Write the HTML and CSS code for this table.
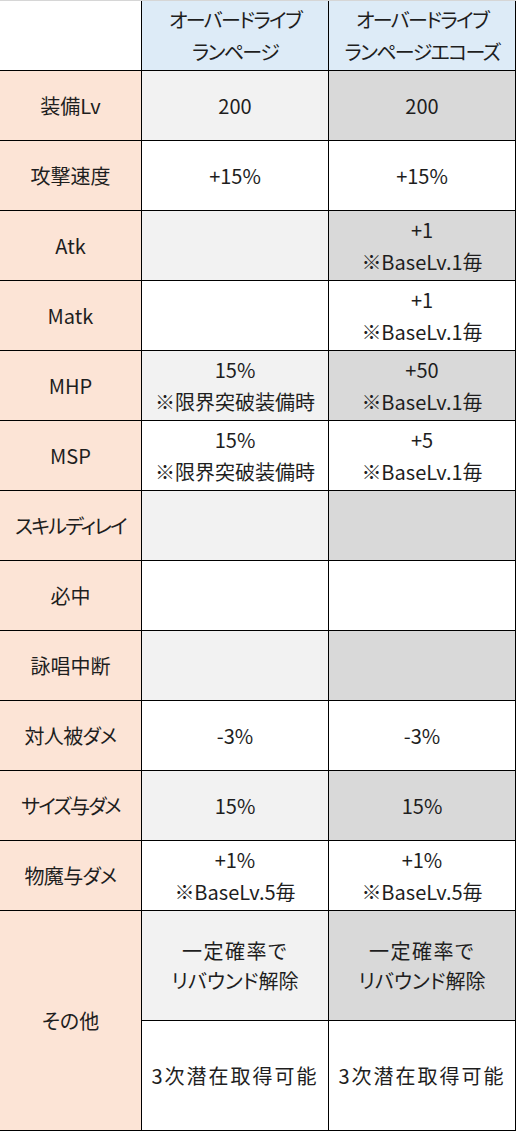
FILE: index.html
```html
<!DOCTYPE html>
<html lang="ja">
<head>
<meta charset="utf-8">
<title>オーバードライブ比較</title>
<link rel="stylesheet" href="styles.css">
</head>
<body>
<div class="table">
  <div class="cell corner"></div>
  <div class="cell head">オーバードライブ<br>ランページ</div>
  <div class="cell head">オーバードライブ<br>ランページエコーズ</div>

  <div class="cell label">装備Lv</div>
  <div class="cell light">200</div>
  <div class="cell dark">200</div>

  <div class="cell label">攻撃速度</div>
  <div class="cell">+15%</div>
  <div class="cell">+15%</div>

  <div class="cell label">Atk</div>
  <div class="cell light"></div>
  <div class="cell dark">+1<br>※BaseLv.1毎</div>

  <div class="cell label">Matk</div>
  <div class="cell"></div>
  <div class="cell">+1<br>※BaseLv.1毎</div>

  <div class="cell label">MHP</div>
  <div class="cell light">15%<br>※限界突破装備時</div>
  <div class="cell dark">+50<br>※BaseLv.1毎</div>

  <div class="cell label">MSP</div>
  <div class="cell">15%<br>※限界突破装備時</div>
  <div class="cell">+5<br>※BaseLv.1毎</div>

  <div class="cell label kana">スキルディレイ</div>
  <div class="cell light"></div>
  <div class="cell dark"></div>

  <div class="cell label">必中</div>
  <div class="cell"></div>
  <div class="cell"></div>

  <div class="cell label">詠唱中断</div>
  <div class="cell light"></div>
  <div class="cell dark"></div>

  <div class="cell label kana-mix">対人被ダメ</div>
  <div class="cell">-3%</div>
  <div class="cell">-3%</div>

  <div class="cell label kana">サイズ与ダメ</div>
  <div class="cell light">15%</div>
  <div class="cell dark">15%</div>

  <div class="cell label kana-mix">物魔与ダメ</div>
  <div class="cell">+1%<br>※BaseLv.5毎</div>
  <div class="cell">+1%<br>※BaseLv.5毎</div>

  <div class="cell label other">その他</div>
  <div class="cell light tight"><div><span class="spaced">一定確率で</span><br>リバウンド解除</div></div>
  <div class="cell dark tight"><div><span class="spaced">一定確率で</span><br>リバウンド解除</div></div>
  <div class="cell wide">3次潜在取得可能</div>
  <div class="cell wide">3次潜在取得可能</div>
</div>
</body>
</html>
```

FILE: styles.css
```css
html, body {
  margin: 0;
  padding: 0;
  background: #ffffff;
}

body {
  font-family: "Noto Sans CJK JP", "Noto Sans", sans-serif;
  font-size: 20px;
  color: #1e1e1e;
  font-feature-settings: "palt" 1;
}

.table {
  width: 516px;
  box-sizing: border-box;
  display: grid;
  grid-template-columns: 141px 186px 186px;
  grid-template-rows: 69px repeat(12, 69px) 109px 109px;
  gap: 1px;
  padding: 0 1px 1px 0;
  background: #000000;
  border-top: 1px solid #d6d6d6;
}

.cell {
  background: #ffffff;
  display: flex;
  align-items: center;
  justify-content: center;
  text-align: center;
  line-height: 32px;
  white-space: nowrap;
}

.corner {
  background: #ffffff;
}

.head {
  background: #ddebf7;
  letter-spacing: -1.6px;
}

.label {
  background: #fce4d6;
}

.kana {
  letter-spacing: -1.8px;
}

.kana-mix {
  letter-spacing: -0.6px;
}

.light {
  background: #f2f2f2;
}

.dark {
  background: #d9d9d9;
}

.other {
  grid-row: span 2;
}

.spaced {
  letter-spacing: 1.5px;
}

.wide {
  letter-spacing: 2px;
}

.tight {
  line-height: 30px;
}
```
